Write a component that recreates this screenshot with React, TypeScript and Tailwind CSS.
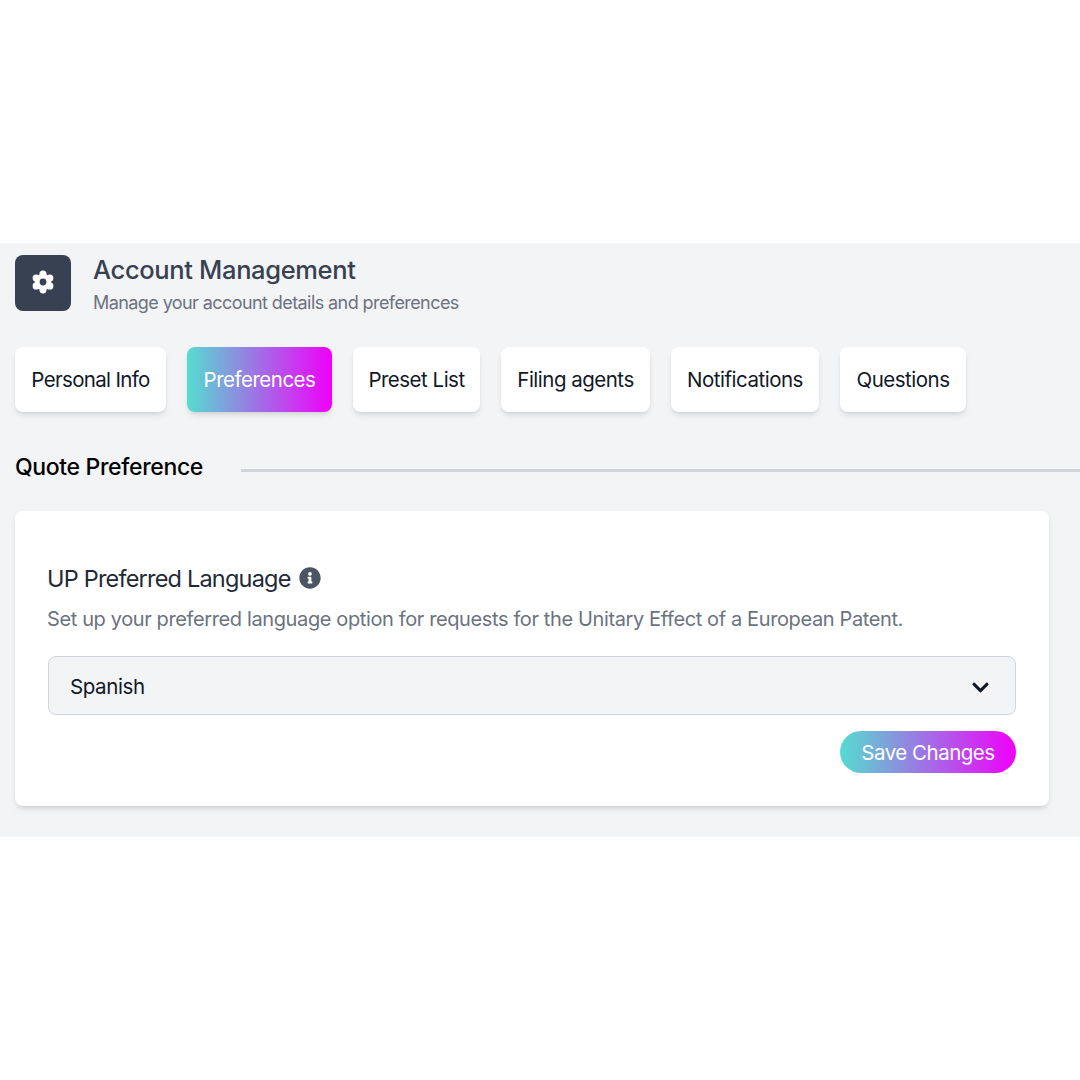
import React from "react";
import { FaInfoCircle, FaChevronDown } from "react-icons/fa";

const tabs = [
    { name: "Personal Info", size: "w-[151px] tracking-[-0.67px]" },
    { name: "Preferences", size: "w-[145px] tracking-[-0.5px]" },
    { name: "Preset List", size: "w-[127px] tracking-[-0.5px]" },
    { name: "Filing agents", size: "w-[149px] tracking-[-0.5px]" },
    { name: "Notifications", size: "w-[148px] tracking-[-0.5px]" },
    { name: "Questions", size: "w-[126px] tracking-[-0.5px]" },
];

function Gear() {
    return (
        <svg viewBox="0 0 24 24" className="w-[24px] h-[24px] -mt-[2px]">
            <g fill="#ffffff">
                <circle cx="12" cy="12" r="8" />
                <circle cx="12" cy="4.2" r="3.6" />
                <circle cx="12" cy="19.8" r="3.6" />
                <circle cx="5.2" cy="8.1" r="3.6" />
                <circle cx="18.8" cy="8.1" r="3.6" />
                <circle cx="5.2" cy="15.9" r="3.6" />
                <circle cx="18.8" cy="15.9" r="3.6" />
            </g>
            <circle cx="12" cy="12" r="3.4" fill="#374151" />
        </svg>
    );
}

export default function App() {
    return (
        <div className="w-[1080px] h-[1080px] bg-white pt-[243px] overflow-hidden font-['Inter',sans-serif]">
            <div className="h-[594px] bg-[#f3f4f6] pl-[15px] pt-[12px]">
                <div className="flex flex-row items-start gap-[22px]">
                    <div className="w-[56px] h-[56px] rounded-lg bg-[#374151] flex items-center justify-center">
                        <Gear />
                    </div>
                    <div className="flex flex-col">
                        <h1 className="text-[25.5px] leading-[30px] font-medium tracking-[-0.35px] text-[#374151]">Account Management</h1>
                        <p className="mt-[6px] text-[18px] leading-[24px] tracking-[-0.58px] text-[#6b7280]">Manage your account details and preferences</p>
                    </div>
                </div>

                <div className="mt-[32px] flex flex-row gap-[21px]">
                    {tabs.map((tab) => (
                        <button
                            key={tab.name}
                            className={
                                tab.name === "Preferences"
                                    ? `${tab.size} h-[65px] pt-[2px] rounded-lg text-[20.5px] text-white bg-linear-to-r/srgb from-[#55dcd0] to-[#f000fb] shadow-md`
                                    : `${tab.size} h-[65px] pt-[2px] rounded-lg text-[20.5px] text-[#111827] bg-white shadow-md`
                            }
                        >
                            {tab.name}
                        </button>
                    ))}
                </div>

                <div className="mt-[39px] flex flex-row items-center">
                    <h2 className="w-[226px] text-[23px] leading-[32px] font-medium tracking-[-0.35px] text-black">Quote Preference</h2>
                    <div className="flex-1 h-[3px] mt-[6px] bg-[#d1d5db]" />
                </div>

                <div className="mt-[28px] w-[1034px] h-[295px] bg-white rounded-lg shadow-md pt-[52px] px-[32px]">
                    <div className="flex flex-row items-center gap-[8px]">
                        <h3 className="text-[23.5px] leading-[32px] tracking-[-0.8px] text-[#1f2937]">UP Preferred Language</h3>
                        <FaInfoCircle className="text-[#4b5563] text-[22px] -mt-[2px]" />
                    </div>
                    <p className="mt-[10px] text-[20px] leading-[28px] tracking-[-0.38px] text-[#6b7280]">
                        Set up your preferred language option for requests for the Unitary Effect of a European Patent.
                    </p>
                    <div className="mt-[23px] ml-px w-[968px] h-[59px] rounded-lg border border-[#d1d5db] bg-[#f3f4f6] flex flex-row items-center justify-between pl-[21px] pr-[25px]">
                        <span className="pt-[3px] text-[20.5px] tracking-[-0.4px] text-[#111827]">Spanish</span>
                        <FaChevronDown className="mt-[3px] text-[#111827] text-[19px]" />
                    </div>
                    <div className="mt-[16px] ml-px w-[968px] flex justify-end">
                        <button className="w-[176px] h-[42px] pt-[2px] rounded-full text-[20.5px] tracking-[-0.5px] text-white bg-linear-to-r/srgb from-[#55dcd0] to-[#f000fb]">
                            Save Changes
                        </button>
                    </div>
                </div>
            </div>
        </div>
    );
}
